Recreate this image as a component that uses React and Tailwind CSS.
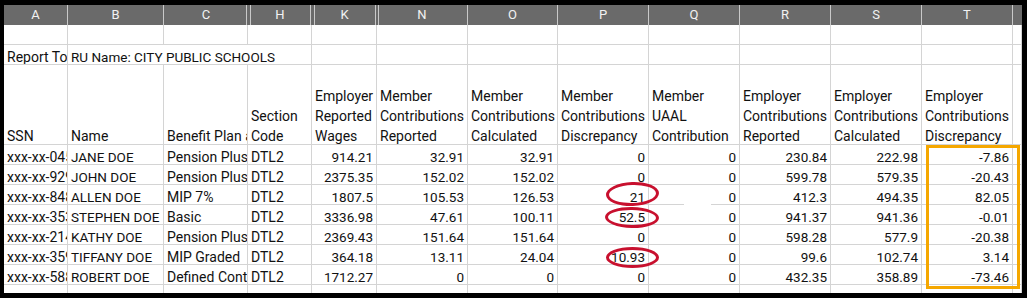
import React from "react";

// column template: A B C H K N O P Q R S T + sliver of the next column
const GRID =
  "grid grid-cols-[64px_96px_84px_64px_65px_91px_90px_91px_91px_91px_91px_91px_9px]";

const LINE = "border-[#d4d4d4]";

const letters = ["A", "B", "C", "H", "K", "N", "O", "P", "Q", "R", "S", "T", ""];

// hidden columns (D-G, I-J, L-M) show as a double line in the header
const letterEdge = {
  A: "border-r border-[#c9c9c9]",
  B: "border-r border-[#c9c9c9]",
  C: "shadow-[inset_-1px_0_0_#6a6a6a,inset_-2px_0_0_#c9c9c9]",
  H: "shadow-[inset_2px_0_0_#6a6a6a,inset_3px_0_0_#c9c9c9,inset_-1px_0_0_#6a6a6a,inset_-2px_0_0_#c9c9c9]",
  K: "shadow-[inset_2px_0_0_#6a6a6a,inset_3px_0_0_#c9c9c9,inset_-1px_0_0_#6a6a6a,inset_-2px_0_0_#c9c9c9]",
  N: "shadow-[inset_1px_0_0_#6a6a6a,inset_2px_0_0_#c9c9c9] border-r border-[#c9c9c9]",
  O: "border-r border-[#c9c9c9]",
  P: "border-r border-[#c9c9c9]",
  Q: "border-r border-[#c9c9c9]",
  R: "border-r border-[#c9c9c9]",
  S: "border-r border-[#c9c9c9]",
  T: "border-r border-[#c9c9c9]",
  "": "",
};

const headers = [
  ["SSN"],
  ["Name"],
  ["Benefit Plan and Type"],
  ["Section", "Code"],
  ["Employer", "Reported", "Wages"],
  ["Member", "Contributions", "Reported"],
  ["Member", "Contributions", "Calculated"],
  ["Member", "Contributions", "Discrepancy"],
  ["Member", "UAAL", "Contribution"],
  ["Employer", "Contributions", "Reported"],
  ["Employer", "Contributions", "Calculated"],
  ["Employer", "Contributions", "Discrepancy"],
  [],
];

const rows = [
  ["xxx-xx-0453", "JANE DOE", "Pension Plus", "DTL2", "914.21", "32.91", "32.91", "0", "0", "230.84", "222.98", "-7.86"],
  ["xxx-xx-9291", "JOHN DOE", "Pension Plus", "DTL2", "2375.35", "152.02", "152.02", "0", "0", "599.78", "579.35", "-20.43"],
  ["xxx-xx-8482", "ALLEN DOE", "MIP 7%", "DTL2", "1807.5", "105.53", "126.53", "21", "0", "412.3", "494.35", "82.05"],
  ["xxx-xx-3533", "STEPHEN DOE", "Basic", "DTL2", "3336.98", "47.61", "100.11", "52.5", "0", "941.37", "941.36", "-0.01"],
  ["xxx-xx-2144", "KATHY DOE", "Pension Plus", "DTL2", "2369.43", "151.64", "151.64", "0", "0", "598.28", "577.9", "-20.38"],
  ["xxx-xx-3599", "TIFFANY DOE", "MIP Graded", "DTL2", "364.18", "13.11", "24.04", "10.93", "0", "99.6", "102.74", "3.14"],
  ["xxx-xx-5888", "ROBERT DOE", "Defined Contribution", "DTL2", "1712.27", "0", "0", "0", "0", "432.35", "358.89", "-73.46"],
];

const Cell = ({ children, right, className = "" }) => (
  <div
    className={`h-[20px] border-r border-b ${LINE} overflow-hidden whitespace-nowrap flex items-end leading-[14px] ${
      right ? "justify-end pr-[3px]" : "pl-[3px]"
    } ${className}`}
  >
    {children}
  </div>
);

const Ellipse = ({ className }) => (
  <div
    className={`absolute rounded-[50%] border-[3px] border-[#c8102e] ${className}`}
  />
);

export default function App() {
  return (
    <div className="relative w-[1027px] h-[298px] bg-black pt-[5px] pl-[4px] overflow-hidden font-['Roboto',sans-serif] text-[14px] text-[#111]">
      <div className="w-[1018px] h-[288px] bg-white overflow-hidden">
        {/* column letters */}
        <div className={GRID}>
          {letters.map((l, i) => (
            <div
              key={i}
              className={`h-[20px] bg-[#6a6a6a] text-[#f2f2f2] text-[13px] leading-[20px] text-center ${letterEdge[l]}`}
            >
              {l}
            </div>
          ))}
        </div>

        <div className={GRID}>
          {/* row 1 */}
          {letters.map((_, i) => (
            <Cell key={`r1-${i}`} />
          ))}

          {/* row 2 */}
          <Cell>Report Total</Cell>
          <Cell className="col-span-3 text-[13.5px]">RU Name: CITY PUBLIC SCHOOLS</Cell>
          {letters.slice(4).map((_, i) => (
            <Cell key={`r2-${i}`} />
          ))}

          {/* row 3: field headers */}
          {headers.map((lines, i) => (
            <div
              key={`h-${i}`}
              className={`h-[80px] border-r border-b ${LINE} overflow-hidden whitespace-nowrap flex flex-col justify-end leading-[20px] pl-[3px]`}
            >
              <div className="translate-y-[2px]">
                {lines.map((t) => (
                  <div key={t}>{t}</div>
                ))}
              </div>
            </div>
          ))}

          {/* data */}
          {rows.map((r, ri) => (
            <React.Fragment key={ri}>
              {r.map((v, ci) => (
                <Cell
                  key={ci}
                  right={ci > 3}
                  className={ci > 3 || ci === 1 ? "text-[13.5px]" : ""}
                >
                  {v}
                </Cell>
              ))}
              <Cell />
            </React.Fragment>
          ))}

          {/* partly visible row */}
          {letters.map((_, i) => (
            <div key={`rx-${i}`} className={`h-[8px] border-r ${LINE}`} />
          ))}
        </div>
      </div>

      {/* annotations */}
      <Ellipse className="left-[606px] top-[182px] w-[53px] h-[24px] -rotate-2" />
      <Ellipse className="left-[605px] top-[207px] w-[54px] h-[21px] rotate-1" />
      <Ellipse className="left-[606px] top-[247px] w-[53px] h-[21px]" />
      <div className="absolute left-[926px] top-[145px] w-[94px] h-[144px] border-[3px] border-[#f5a700]" />

      {/* white smudges left on the sheet */}
      <div className="absolute left-[684px] top-[204px] w-[27px] h-[3px] bg-white" />
      <div className="absolute left-[695px] top-[222px] w-[5px] h-[2px] bg-white" />
    </div>
  );
}
